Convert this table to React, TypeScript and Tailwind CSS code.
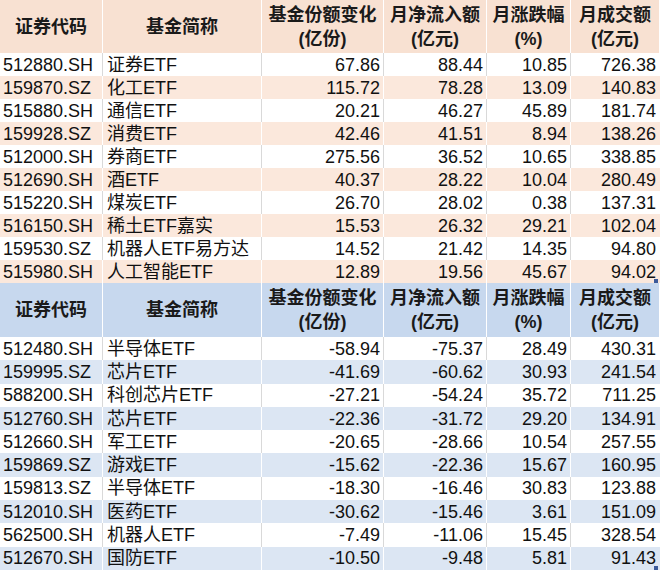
import React from "react";

type Row = [string, string, string, string, string, string];

const top: Row[] = [
  ["512880.SH", "证券ETF", "67.86", "88.44", "10.85", "726.38"],
  ["159870.SZ", "化工ETF", "115.72", "78.28", "13.09", "140.83"],
  ["515880.SH", "通信ETF", "20.21", "46.27", "45.89", "181.74"],
  ["159928.SZ", "消费ETF", "42.46", "41.51", "8.94", "138.26"],
  ["512000.SH", "券商ETF", "275.56", "36.52", "10.65", "338.85"],
  ["512690.SH", "酒ETF", "40.37", "28.22", "10.04", "280.49"],
  ["515220.SH", "煤炭ETF", "26.70", "28.02", "0.38", "137.31"],
  ["516150.SH", "稀土ETF嘉实", "15.53", "26.32", "29.21", "102.04"],
  ["159530.SZ", "机器人ETF易方达", "14.52", "21.42", "14.35", "94.80"],
  ["515980.SH", "人工智能ETF", "12.89", "19.56", "45.67", "94.02"],
];

const bottom: Row[] = [
  ["512480.SH", "半导体ETF", "-58.94", "-75.37", "28.49", "430.31"],
  ["159995.SZ", "芯片ETF", "-41.69", "-60.62", "30.93", "241.54"],
  ["588200.SH", "科创芯片ETF", "-27.21", "-54.24", "35.72", "711.25"],
  ["512760.SH", "芯片ETF", "-22.36", "-31.72", "29.20", "134.91"],
  ["512660.SH", "军工ETF", "-20.65", "-28.66", "10.54", "257.55"],
  ["159869.SZ", "游戏ETF", "-15.62", "-22.36", "15.67", "160.95"],
  ["159813.SZ", "半导体ETF", "-18.30", "-16.46", "30.83", "123.88"],
  ["512010.SH", "医药ETF", "-30.62", "-15.46", "3.61", "151.09"],
  ["562500.SH", "机器人ETF", "-7.49", "-11.06", "15.45", "328.54"],
  ["512670.SH", "国防ETF", "-10.50", "-9.48", "5.81", "91.43"],
];

const font = {
  fontFamily: '"Liberation Sans", Arial, "Noto Sans CJK SC", sans-serif',
};

const cols = "grid grid-cols-[103px_159px_122px_103px_84px_89px]";

function Header({ bg, h }: { bg: string; h: string }) {
  const cell = "flex flex-col items-center justify-center border-r border-white font-bold text-[18px] leading-[24px] text-[#1a1a1a]";
  return (
    <div className={`${cols} ${bg} ${h}`}>
      <div className={cell}>证券代码</div>
      <div className={cell}>基金简称</div>
      <div className={cell}>
        <span>基金份额变化</span>
        <span>(亿份)</span>
      </div>
      <div className={cell}>
        <span>月净流入额</span>
        <span>(亿元)</span>
      </div>
      <div className={cell}>
        <span>月涨跌幅</span>
        <span>(%)</span>
      </div>
      <div className={cell}>
        <span>月成交额</span>
        <span>(亿元)</span>
      </div>
    </div>
  );
}

function Body({ rows, alt, rh }: { rows: Row[]; alt: string; rh: string }) {
  return (
    <div className="flex flex-col">
      {rows.map((r, i) => {
        const colored = i % 2 === 1;
        const bc = colored ? "border-white" : "border-[#d9d9d9]";
        return (
          <div
            key={r[0]}
            className={`${cols} ${rh} items-center text-[18px] leading-[22px] text-[#111] ${colored ? alt : "bg-white"}`}
          >
            <div className={`h-full flex items-center border-r ${bc} pl-[3px] whitespace-nowrap`}>{r[0]}</div>
            <div className={`h-full flex items-center border-r ${bc} pl-[4px] whitespace-nowrap`}>{r[1]}</div>
            <div className={`h-full flex items-center justify-end border-r ${bc} pr-[3px]`}>{r[2]}</div>
            <div className={`h-full flex items-center justify-end border-r ${bc} pr-[3px]`}>{r[3]}</div>
            <div className={`h-full flex items-center justify-end border-r ${bc} pr-[3px]`}>{r[4]}</div>
            <div className="h-full flex items-center justify-end pr-[4px]">{r[5]}</div>
          </div>
        );
      })}
    </div>
  );
}

export default function App() {
  return (
    <div className="w-[660px] h-[570px] bg-white overflow-hidden" style={font}>
      <div className="relative">
        <Header bg="bg-[#f8e1d2]" h="h-[53px]" />
        <Body rows={top} alt="bg-[#fbe8dc]" rh="h-[23px]" />
        <div className="absolute right-[2px] bottom-0 w-[4px] h-[4px] bg-[#3b5a9a]" />
      </div>
      <div className="relative">
        <Header bg="bg-[#c7d8ee]" h="h-[54px]" />
        <Body rows={bottom} alt="bg-[#dce6f3]" rh="h-[23.3px]" />
        <div className="absolute right-[2px] bottom-0 w-[4px] h-[4px] bg-[#3b5a9a]" />
      </div>
    </div>
  );
}
